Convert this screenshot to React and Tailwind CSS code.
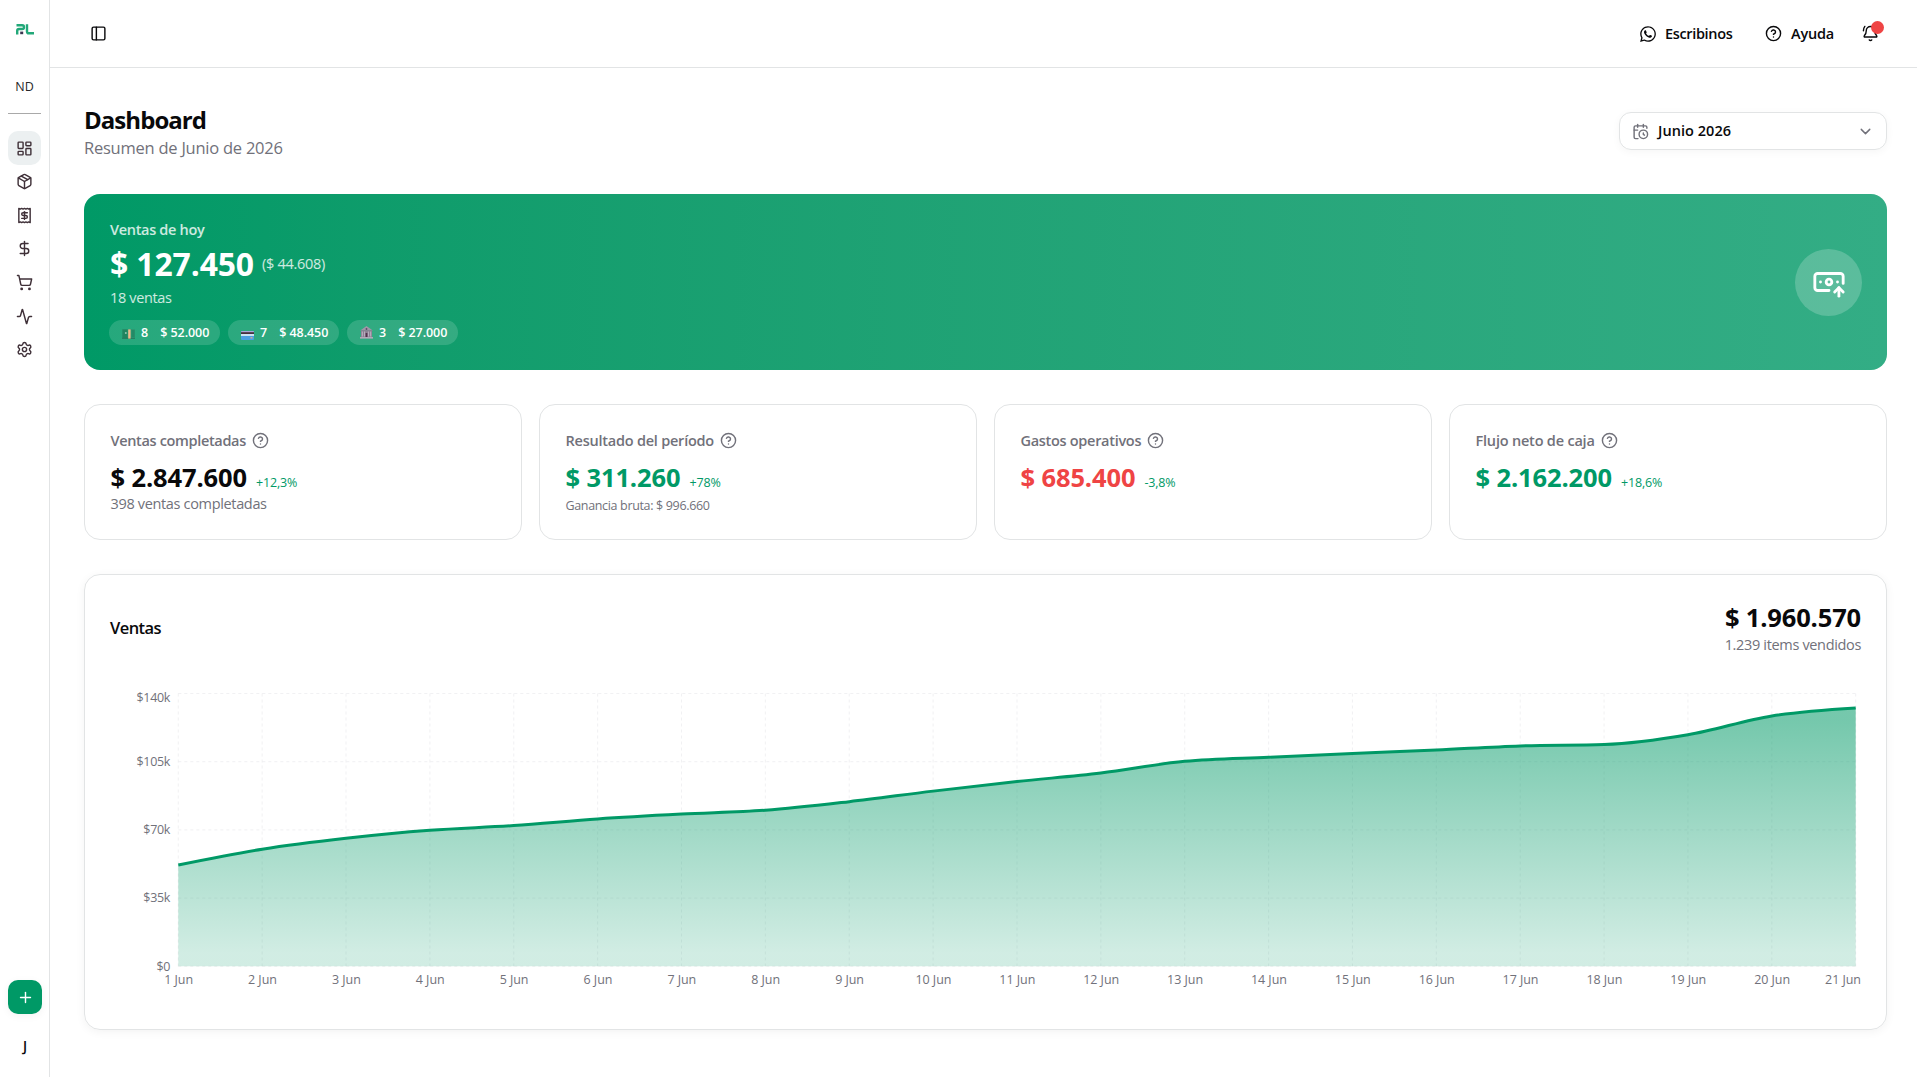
import React, { useState } from 'react';
import {
  Activity,
  BanknoteArrowUp,
  BellRing,
  CalendarClock,
  ChevronDown,
  CircleQuestionMark,
  DollarSign,
  LayoutDashboard,
  Package,
  PanelLeft,
  Plus,
  Receipt,
  Settings,
  ShoppingCart,
} from 'lucide-react';
import { FaWhatsapp } from 'react-icons/fa';

const navItems = [
  { id: 'dashboard', icon: LayoutDashboard },
  { id: 'products', icon: Package },
  { id: 'receipts', icon: Receipt },
  { id: 'money', icon: DollarSign },
  { id: 'purchases', icon: ShoppingCart },
  { id: 'activity', icon: Activity },
  { id: 'settings', icon: Settings },
];

const stats = [
  {
    title: 'Ventas completadas',
    titleClass: 'tracking-[-0.34px]',
    amount: '$ 2.847.600',
    color: 'text-[#09090b]',
    change: '+12,3%',
    note: '398 ventas completadas',
    noteClass: 'text-[14.5px] leading-5 tracking-[-0.34px]',
  },
  {
    title: 'Resultado del período',
    titleClass: 'tracking-[-0.23px]',
    amount: '$ 311.260',
    color: 'text-[#009966]',
    change: '+78%',
    note: 'Ganancia bruta: $ 996.660',
    noteClass: 'text-[12.5px] leading-6 tracking-[-0.34px]',
  },
  {
    title: 'Gastos operativos',
    titleClass: 'tracking-[-0.3px]',
    amount: '$ 685.400',
    color: 'text-[#ef4444]',
    change: '-3,8%',
  },
  {
    title: 'Flujo neto de caja',
    titleClass: 'tracking-[-0.2px]',
    amount: '$ 2.162.200',
    color: 'text-[#009966]',
    change: '+18,6%',
  },
];

const sales = [
  52.0, 60.1, 65.7, 69.8, 72.2, 75.6, 78.1, 80.1, 84.5, 89.9, 94.8, 99.2, 105.2, 107.3, 109.2, 111.0, 113.1, 113.8,
  118.8, 128.5, 132.6,
];

const Logo = () => (
  <svg width="18" height="12" viewBox="0 0 18 12" fill="none">
    <path d="M0.5 1.3H6.2Q8 1.3 8 3.2Q8 5 6.2 5H3Q1.2 5 1.2 6.8V10.5" stroke="#22a879" strokeWidth="2.4" />
    <path d="M11 0.2V7.4Q11 9.3 12.9 9.3H18" stroke="#22a879" strokeWidth="2.4" />
    <rect x="4.2" y="7.6" width="3" height="2.6" fill="#3a3550" />
  </svg>
);

const CashIcon = () => (
  <svg width="13" height="10" viewBox="0 0 13 10" className="mt-[3px]">
    <rect width="13" height="10" rx="0.5" fill="#2b9872" />
    <rect x="0.5" y="0.5" width="5" height="8.5" fill="#20845f" />
    <rect x="0" y="8.8" width="13" height="1" fill="#23795c" />
    <circle cx="3.8" cy="4" r="1" fill="#8fc9b0" />
    <rect x="6.2" y="0.4" width="2.4" height="9.2" fill="#f0b98a" />
    <rect x="9.6" y="1" width="3" height="7" fill="#238a66" />
  </svg>
);

const CardIcon = () => (
  <svg width="13" height="9" viewBox="0 0 13 9" className="mt-[5px]">
    <rect width="13" height="9" rx="1" fill="#4a9fe0" />
    <path d="M0 1a1 1 0 0 1 1-1h11a1 1 0 0 1 1 1v1H0z" fill="#a9a6d8" />
    <rect y="1.2" width="13" height="1.8" fill="#472f3b" />
    <rect y="3" width="13" height="2" fill="#c9e3f2" />
    <rect x="9.5" y="6.2" width="2" height="1.2" fill="#e6b080" />
  </svg>
);

const BankIcon = () => (
  <svg width="13" height="13" viewBox="0 0 13 13" className="-mt-px">
    <path d="M6.5 0L12.8 4.6H0.2z" fill="#a196a8" />
    <rect x="1" y="4.2" width="11" height="7" fill="#8b8092" />
    <path d="M2.3 5.5v5M4.6 5.5v5M8.4 5.5v5M10.7 5.5v5" stroke="#c3b8c8" strokeWidth="0.9" />
    <rect x="5.6" y="7" width="1.8" height="4" fill="#54304d" />
    <circle cx="6.5" cy="3" r="0.9" fill="#5d4a66" />
    <rect x="0" y="11" width="13" height="1.6" fill="#b3a8b8" />
  </svg>
);

const payments = [
  { icon: CashIcon, count: 8, total: '$ 52.000' },
  { icon: CardIcon, count: 7, total: '$ 48.450' },
  { icon: BankIcon, count: 3, total: '$ 27.000' },
];

// monotone cubic interpolation, same curve as d3's curveMonotoneX
const monotonePath = (pts) => {
  const n = pts.length;
  const slopes = [];
  for (let i = 0; i < n - 1; i++) {
    slopes.push((pts[i + 1][1] - pts[i][1]) / (pts[i + 1][0] - pts[i][0]));
  }
  const t = pts.map((_, i) => {
    if (i === 0 || i === n - 1) return 0;
    const a = slopes[i - 1];
    const b = slopes[i];
    if (a * b <= 0) return 0;
    return Math.sign(a) * 2 * Math.min(Math.abs(a), Math.abs(b), 0.25 * Math.abs(a + b));
  });
  t[0] = (3 * slopes[0] - t[1]) / 2;
  t[n - 1] = (3 * slopes[n - 2] - t[n - 2]) / 2;
  let d = `M${pts[0][0]},${pts[0][1]}`;
  for (let i = 0; i < n - 1; i++) {
    const [x0, y0] = pts[i];
    const [x1, y1] = pts[i + 1];
    const dx = (x1 - x0) / 3;
    d += `C${x0 + dx},${y0 + dx * t[i]},${x1 - dx},${y1 - dx * t[i + 1]},${x1},${y1}`;
  }
  return d;
};

const SalesChart = () => {
  const left = 68.3;
  const right = 1745.7;
  const top = 13.5;
  const bottom = 286.3;
  const step = (right - left) / (sales.length - 1);
  const x = (i) => left + i * step;
  const y = (v) => bottom - (v / 140) * (bottom - top);
  const line = monotonePath(sales.map((v, i) => [x(i), y(v)]));
  const ticks = [0, 35, 70, 105, 140];

  return (
    <svg width="1751" height="324" viewBox="0 0 1751 324" className="mt-[25px] block">
      <defs>
        <linearGradient id="fillSales" x1="0" y1="0" x2="0" y2="1">
          <stop offset="5%" stopColor="#009966" stopOpacity="0.54" />
          <stop offset="95%" stopColor="#009966" stopOpacity="0.18" />
        </linearGradient>
      </defs>
      <g stroke="#e4e4e7" strokeOpacity="0.5" strokeDasharray="3 3">
        {ticks.map((v) => (
          <line key={v} x1={left} x2={right} y1={y(v)} y2={y(v)} />
        ))}
        {sales.map((_, i) => (
          <line key={i} x1={x(i)} x2={x(i)} y1={top} y2={bottom} />
        ))}
      </g>
      <path d={`${line}L${right},${bottom}L${left},${bottom}Z`} fill="url(#fillSales)" />
      <path d={line} fill="none" stroke="#009966" strokeWidth="3" />
      <g className="fill-[#71717a] text-[12.5px]">
        {ticks.map((v) => (
          <text key={v} x="60" y={v === 140 ? 22 : y(v) + 4.3} textAnchor="end" className="tracking-[-0.34px]">
            {v === 0 ? '$0' : `$${v}k`}
          </text>
        ))}
        {sales.map((_, i) => (
          <text
            key={i}
            x={i === sales.length - 1 ? 1751 : x(i) + 0.3}
            y="304"
            textAnchor={i === sales.length - 1 ? 'end' : 'middle'}
            className="tracking-[-0.05px]"
          >
            {i + 1} Jun
          </text>
        ))}
      </g>
    </svg>
  );
};

const Sidebar = () => {
  const [active, setActive] = useState('dashboard');

  return (
    <aside className="flex w-[50px] shrink-0 flex-col items-center border-r border-[#e2e4e5] pb-[20px] pt-6">
      <Logo />
      <span className="mt-[42px] text-[12.5px] font-medium leading-[18px] text-[#27272a]">ND</span>
      <div className="mt-[17px] h-px w-[33px] bg-[#a9a9a9]" />
      <nav className="mt-[17.3px] flex flex-col">
        {navItems.map(({ id, icon: Icon }) => (
          <button
            key={id}
            onClick={() => setActive(id)}
            className={`flex h-[33.6px] w-[33px] items-center justify-center rounded-[10px] text-[#3f3038] ${
              active === id ? 'bg-[#ecf0f1]' : ''
            }`}
          >
            <Icon size={17} />
          </button>
        ))}
      </nav>
      <button className="ml-px mt-auto flex size-[34px] items-center justify-center rounded-[10px] bg-[#009966] text-white shadow-[0_2px_8px_rgba(0,0,0,0.05)]">
        <Plus size={17} />
      </button>
      <span className="ml-px mt-[21px] text-[13.5px] font-[550] leading-[22px] text-[#09090b]">J</span>
    </aside>
  );
};

const Header = () => (
  <header className="flex h-[68px] items-center justify-between border-b border-[#e2e4e5] pl-10 pr-[38px] text-[14.5px] font-[550]">
    <PanelLeft size={17} />
    <div className="flex items-center">
      <FaWhatsapp size={18} />
      <span className="ml-2 w-[67px] tracking-[-0.35px]">Escribinos</span>
      <CircleQuestionMark size={17} className="ml-[33px]" />
      <span className="ml-[9px] w-[43px] tracking-[-0.2px]">Ayuda</span>
      <div className="relative ml-[28px]">
        <BellRing size={17} />
        <span className="absolute -top-[4px] left-[9px] size-[13px] rounded-full bg-[#ef4444]" />
      </div>
    </div>
  </header>
);

const StatCard = ({ title, titleClass, amount, color, change, note, noteClass }) => (
  <div className="h-[136px] rounded-2xl border border-[#e2e4e5] px-[25.5px] pt-[25px]">
    <div className="flex items-center gap-1.5 text-[14.5px] font-[550] leading-[21px] text-[#71717a]">
      <span className={titleClass}>{title}</span>
      <CircleQuestionMark size={17} />
    </div>
    <div className="mt-[9px] flex h-[34px] items-baseline gap-[9px] leading-[34px]">
      <span className={`text-[25.5px] font-bold tracking-[-0.12px] ${color}`}>{amount}</span>
      <span className="text-[12.5px] font-medium tracking-[-0.15px] text-[#009966]">{change}</span>
    </div>
    {note && <p className={`text-[#71717a] ${noteClass}`}>{note}</p>}
  </div>
);

const App = () => {
  return (
    <div className="flex h-[1077px] w-[1917px] overflow-hidden bg-white font-['Open_Sans','Noto_Sans',sans-serif] text-[#09090b]">
      <Sidebar />
      <div className="flex flex-1 flex-col">
        <Header />
        <main className="flex flex-col pl-[34px] pr-[30px] pt-[35px]">
          <div className="flex h-[57px] items-center justify-between">
            <div>
              <h1 className="text-[24px] font-bold leading-[33px] tracking-[-0.95px]">Dashboard</h1>
              <p className="text-[16.5px] leading-6 tracking-[-0.24px] text-[#71717a]">Resumen de Junio de 2026</p>
            </div>
            <button className="mb-px flex h-[38px] w-[268px] items-center rounded-xl border border-[#e2e4e5] px-3 shadow-[0_2px_8px_rgba(0,0,0,0.04)]">
              <CalendarClock size={17} className="text-[#71717a]" />
              <span className="ml-[9px] text-[14.5px] font-[550] tracking-[0.05px]">Junio 2026</span>
              <ChevronDown size={17} className="ml-auto text-[#71717a]" />
            </button>
          </div>

          <section className="mt-[34px] flex h-[176px] items-center justify-between rounded-2xl bg-linear-to-r from-[#009966] to-[#33ad85] pl-[26px] pr-[25px] text-white">
            <div className="text-[14.5px] leading-[21px]">
              <p className="font-[550] tracking-[-0.32px] text-white/80">Ventas de hoy</p>
              <div className="mt-1 flex h-[38px] items-center gap-2">
                <span className="text-[31.875px] font-bold tracking-[-0.1px]">$ 127.450</span>
                <span className="tracking-[-0.28px] text-white/80">($ 44.608)</span>
              </div>
              <p className="mt-[5px] tracking-[-0.35px] text-white/80">18 ventas</p>
              <div className="-ml-px mt-3 flex gap-2">
                {payments.map(({ icon: Icon, count, total }) => (
                  <div
                    key={total}
                    className="flex h-[25px] w-[111px] items-center rounded-full bg-white/15 pl-[13px] text-[12.5px] font-semibold"
                  >
                    <Icon />
                    <span className="ml-1.5">{count}</span>
                    <span className="ml-3 tracking-[-0.05px]">{total}</span>
                  </div>
                ))}
              </div>
            </div>
            <div className="flex size-[67px] items-center justify-center rounded-full bg-white/20">
              <BanknoteArrowUp size={34} />
            </div>
          </section>

          <section className="mt-[34px] grid grid-cols-4 gap-[17px]">
            {stats.map((s) => (
              <StatCard key={s.title} {...s} />
            ))}
          </section>

          <section className="mt-[34px] h-[456px] rounded-2xl border border-[#e2e4e5] px-[25px] pt-[25px] shadow-[0_2px_10px_rgba(0,0,0,0.05)]">
            <div className="flex items-center justify-between">
              <h2 className="mt-px text-[16.5px] font-[550] tracking-[-0.55px]">Ventas</h2>
              <div className="text-right">
                <p className="text-[25.5px] font-bold leading-[34px] tracking-[-0.16px]">$ 1.960.570</p>
                <p className="text-[14.5px] leading-[21px] tracking-[-0.34px] text-[#71717a]">1.239 items vendidos</p>
              </div>
            </div>
            <SalesChart />
          </section>
        </main>
      </div>
    </div>
  );
};

export default App;
